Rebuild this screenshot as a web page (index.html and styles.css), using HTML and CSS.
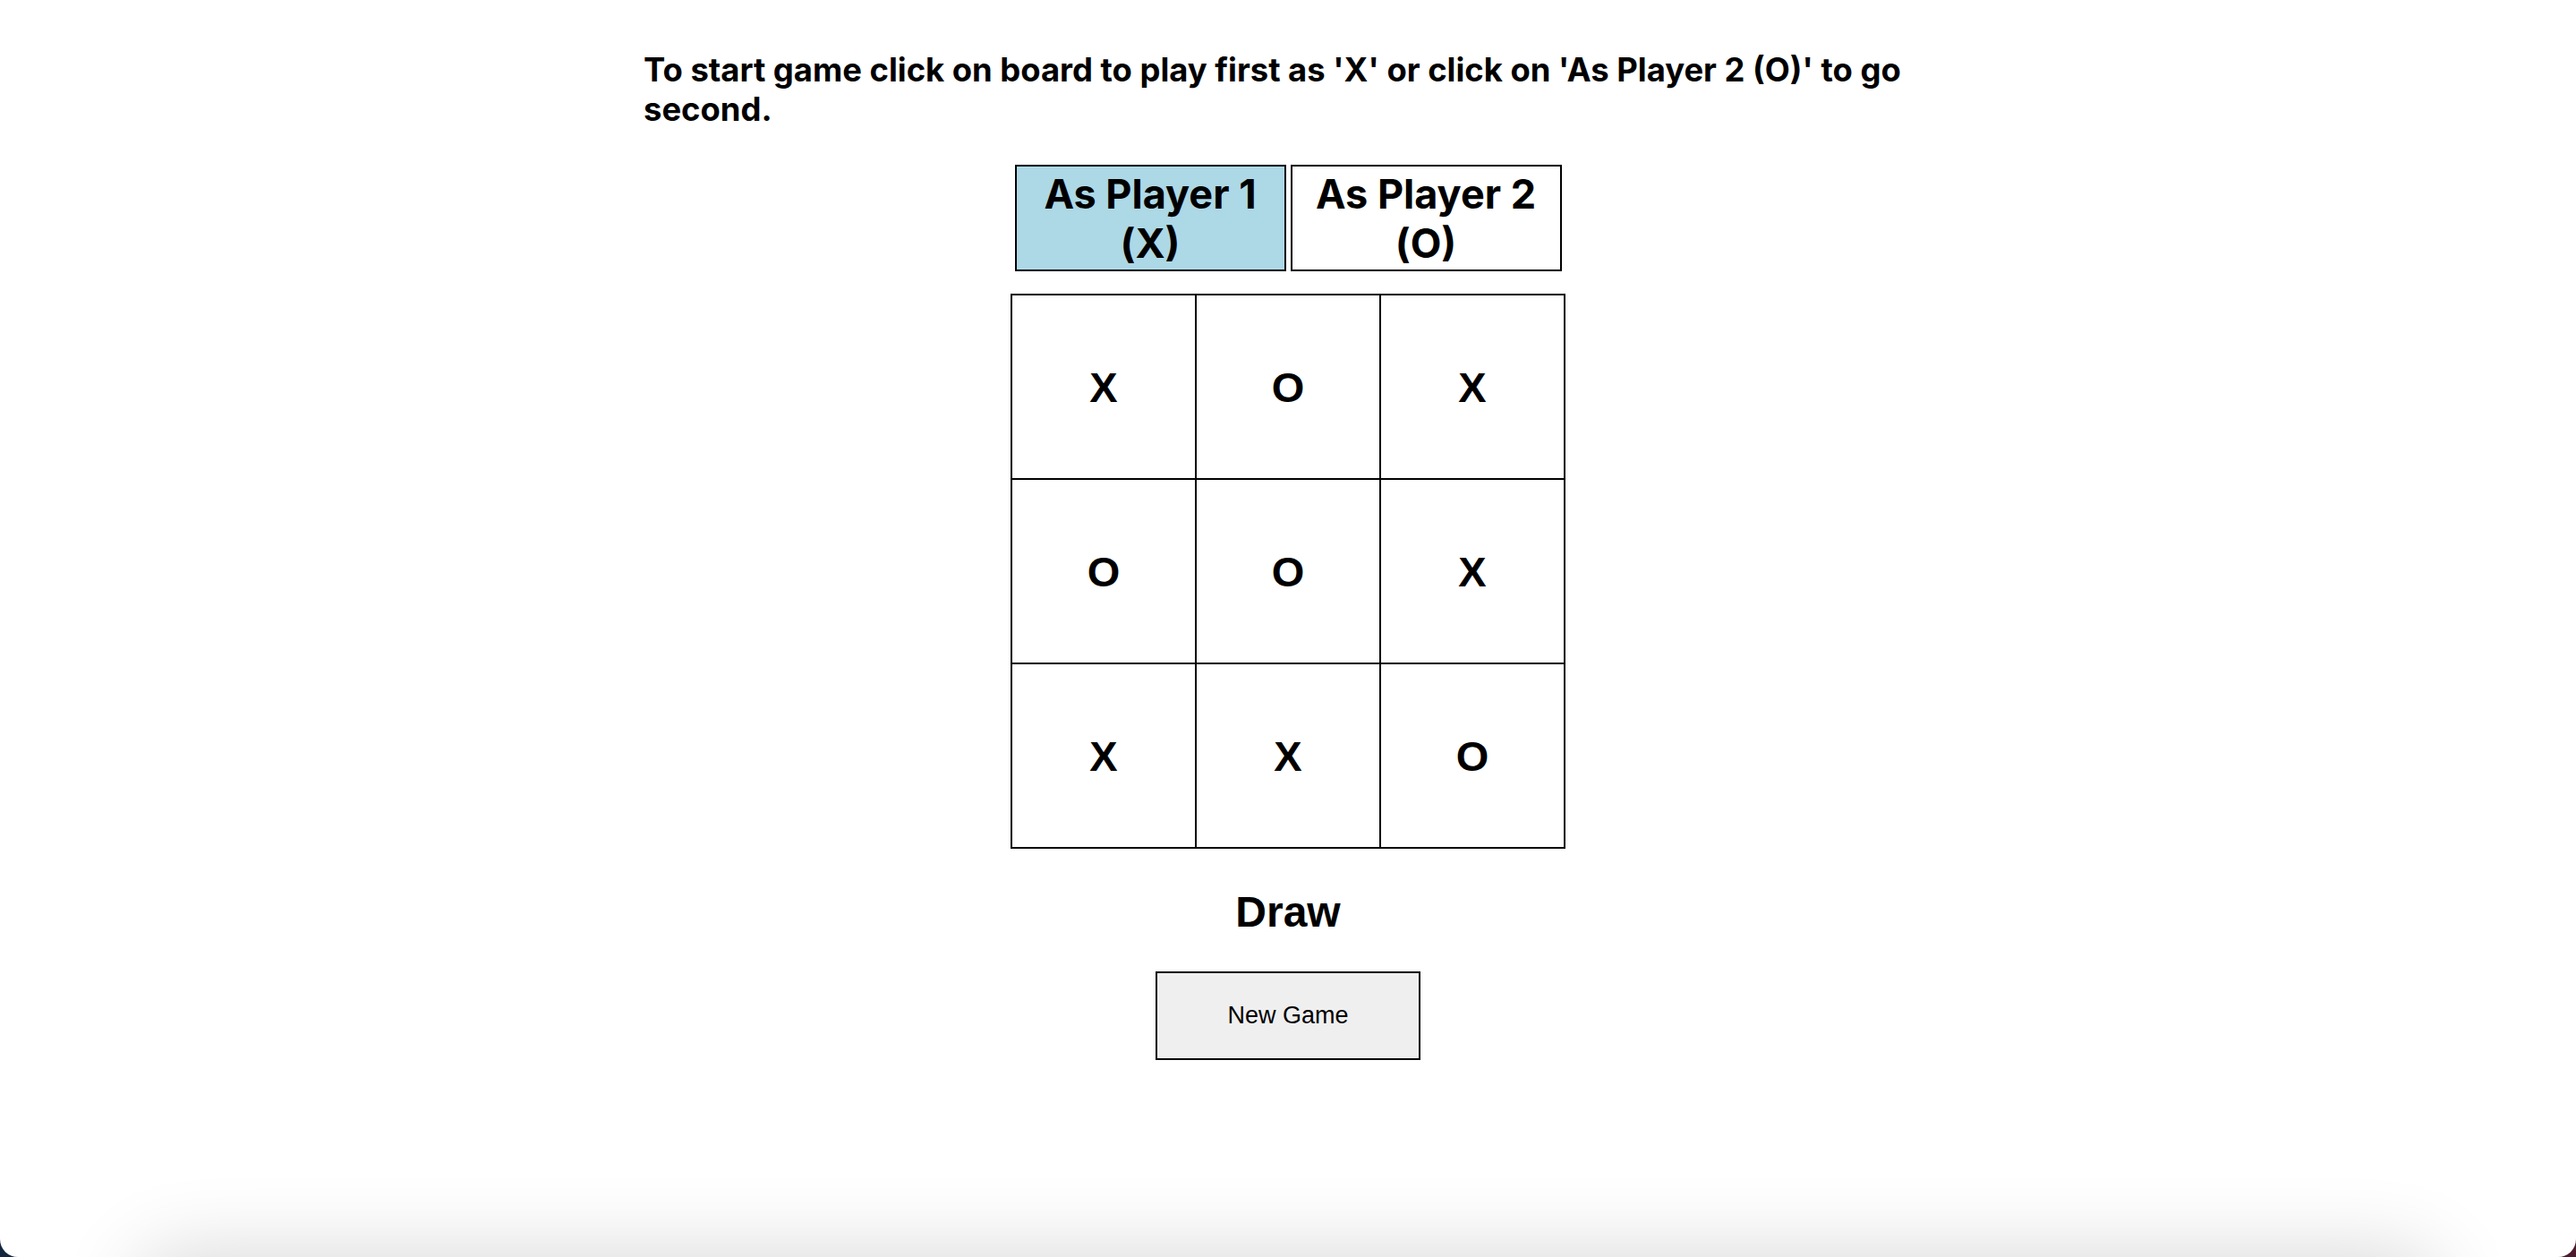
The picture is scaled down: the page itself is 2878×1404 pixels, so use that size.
FILE: index.html
```html
<!DOCTYPE html>
<html lang="en">
<head>
<meta charset="utf-8">
<title>Tic Tac Toe</title>
<link rel="stylesheet" href="styles.css">
</head>
<body>
<div class="window">
  <main class="game">
    <h3 class="intro">To start game click on board to play first as 'X' or click on 'As Player 2 (O)' to go second.</h3>
    <div class="players">
      <button class="player active">As Player 1 (X)</button>
      <button class="player">As Player 2 (O)</button>
    </div>
    <div class="board">
      <div class="cell">X</div>
      <div class="cell">O</div>
      <div class="cell">X</div>
      <div class="cell">O</div>
      <div class="cell">O</div>
      <div class="cell">X</div>
      <div class="cell">X</div>
      <div class="cell">X</div>
      <div class="cell">O</div>
    </div>
    <h2 class="status">Draw</h2>
    <button class="new-game">New Game</button>
  </main>
  <div class="dock-shadow"></div>
</div>
</body>
</html>
```

FILE: styles.css
```css
html {
  margin: 0;
  height: 100%;
  background: linear-gradient(to right, #12263f 0%, #12263f 50%, #4d1a2e 50%, #4d1a2e 100%);
}
body {
  margin: 0;
  height: 100%;
  overflow: hidden;
}
.window {
  position: relative;
  height: 1404px;
  background: #ffffff;
  border-radius: 0 0 20px 20px;
  overflow: hidden;
}
.game {
  width: 1440px;
  margin: 0 auto;
  padding-top: 56px;
  display: flex;
  flex-direction: column;
  align-items: center;
  color: #000;
}
.intro {
  align-self: stretch;
  margin: 0;
  font-family: Inter, "Liberation Sans", sans-serif;
  font-weight: 700;
  font-size: 36.4px;
  line-height: 44px;
  text-align: left;
}
.players {
  margin-top: 40px;
  display: flex;
  gap: 5px;
}
.player {
  width: 303px;
  height: 119px;
  margin: 0;
  padding: 0 6px;
  border: 2px solid #000;
  background: #fff;
  color: #000;
  font-family: Inter, "Liberation Sans", sans-serif;
  font-weight: 700;
  font-size: 45px;
  line-height: 55px;
  text-align: center;
  overflow: visible;
}
.player.active {
  background: #add8e6;
}
.board {
  margin-top: 25px;
  display: grid;
  grid-template-columns: repeat(3, 204px);
  grid-template-rows: repeat(3, 204px);
  gap: 2px;
  padding: 2px;
  background: #000;
}
.cell {
  background: #fff;
  display: flex;
  align-items: center;
  justify-content: center;
  font-family: "Liberation Sans", Arial, sans-serif;
  font-weight: 700;
  font-size: 47px;
}
.status {
  margin: 43px 0 0;
  font-family: "Liberation Sans", Arial, sans-serif;
  font-weight: 700;
  font-size: 48px;
  line-height: 55px;
}
.new-game {
  margin-top: 39px;
  width: 296px;
  height: 99px;
  border: 2px solid #000;
  background: #efefef;
  color: #000;
  font-family: "Liberation Sans", Arial, sans-serif;
  font-size: 27px;
}
.dock-shadow {
  position: absolute;
  left: 170px;
  right: 170px;
  top: 1420px;
  height: 60px;
  border-radius: 40px;
  box-shadow: 0 0 90px 20px rgba(0, 0, 0, 0.16);
}
```
